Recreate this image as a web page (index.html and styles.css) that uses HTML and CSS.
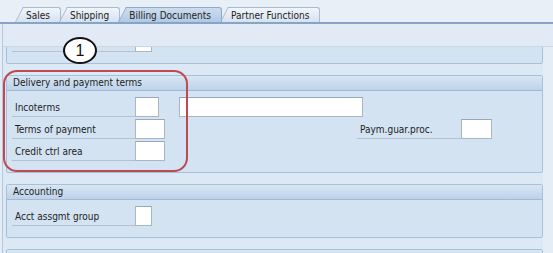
FILE: index.html
```html
<!DOCTYPE html>
<html>
<head>
<meta charset="utf-8">
<link rel="stylesheet" href="styles.css">
</head>
<body>
<div class="tabbar">
  <div class="tab">Sales</div>
  <div class="tab">Shipping</div>
  <div class="tab active">Billing Documents</div>
  <div class="tab">Partner Functions</div>
</div>
<div class="panel">
  <div class="band"></div>
  <div class="scroll">
    <div class="groups">
      <section class="group">
        <div class="ghead">Sales Data</div>
        <div class="gbody">
          <div class="row"><span class="label"></span><span class="input w17"></span></div>
        </div>
      </section>
      <section class="group">
        <div class="ghead">Delivery and payment terms</div>
        <div class="gbody">
          <div class="row"><span class="label">Incoterms</span><span class="input w24"></span><span class="input w184 gap20"></span></div>
          <div class="row"><span class="label">Terms of payment</span><span class="input w30"></span><span class="label label2">Paym.guar.proc.</span><span class="input w31"></span></div>
          <div class="row"><span class="label">Credit ctrl area</span><span class="input w30"></span></div>
        </div>
      </section>
      <section class="group">
        <div class="ghead">Accounting</div>
        <div class="gbody">
          <div class="row"><span class="label">Acct assgmt group</span><span class="input w17"></span></div>
        </div>
      </section>
      <section class="group">
        <div class="ghead"><span class="mark"></span></div>
        <div class="gbody"></div>
      </section>
    </div>
  </div>
</div>
<div class="highlight"></div>
<div class="badge">1</div>
</body>
</html>
```
FILE: styles.css
```css
body {
  margin: 0;
  width: 553px;
  height: 253px;
  overflow: hidden;
  position: relative;
  background: #e4edf6;
  font-family: "DejaVu Sans Condensed", "DejaVu Sans", sans-serif;
  font-stretch: condensed;
  font-size: 10px;
  color: #222;
}

.tabbar {
  display: flex;
  height: 15px;
  padding: 7px 0 0 23px;
  background: #e9eff6;
  border-bottom: 2px solid #86a4c6;
}

.tab {
  position: relative;
  z-index: 1;
  height: 14px;
  line-height: 15px;
  padding: 0 10px 0 3px;
  margin-right: 6px;
  border: 1px solid #a7bbd2;
  border-left: 0;
  border-bottom: 0;
  border-radius: 0 3px 0 0;
  background: linear-gradient(#f1f5fa, #d6e2ef);
  white-space: nowrap;
}

.tab::before {
  content: "";
  position: absolute;
  z-index: -1;
  left: -8px;
  top: -1px;
  bottom: 0;
  width: 12px;
  background: inherit;
  border-left: 1px solid #a7bbd2;
  border-top: 1px solid #a7bbd2;
  transform: skewX(-28deg);
  transform-origin: bottom left;
}

.tab.active {
  z-index: 2;
  background: linear-gradient(#cddcee, #b1c9e4);
  border-color: #8fabcc;
}

.tab.active::before {
  border-color: #8fabcc;
}

.panel {
  border-left: 1px solid #b5c8dd;
  margin-left: 2px;
}

.band {
  height: 22px;
  background: #e2ebf5;
  border-bottom: 1px solid #c9d7e7;
}

.scroll {
  height: 206px;
  width: 537px;
  overflow: hidden;
  padding-left: 3px;
  background: #dce8f4;
}

.groups {
  margin-top: -37px;
  display: flex;
  flex-direction: column;
  gap: 11px;
}

.group {
  border: 1px solid #a9c0da;
  border-radius: 2px;
  background: #d4e3f2;
}

.ghead {
  height: 14px;
  line-height: 14px;
  padding-left: 6px;
  background: linear-gradient(#d8e6f4, #bdd2e9);
  border-bottom: 1px solid #a0b9d5;
}

.mark {
  display: inline-block;
  width: 5px;
  height: 2px;
  margin: 3px 0 0 2px;
  vertical-align: top;
  background: #555;
}

.gbody {
  padding: 6px 0 11px 5px;
  display: flex;
  flex-direction: column;
  gap: 2px;
}

.row {
  display: flex;
  height: 20px;
}

.label {
  box-sizing: border-box;
  width: 123px;
  height: 20px;
  padding: 1px 0 0 3px;
  line-height: 19px;
  border-bottom: 1px solid #b3c1d0;
  white-space: nowrap;
}

.label2 {
  width: 104px;
  margin-left: 192px;
}

.input {
  box-sizing: border-box;
  height: 20px;
  background: #fff;
  border: 1px solid #a8b6c6;
  border-top-color: #98a8ba;
}

.w17 { width: 17px; }
.w24 { width: 24px; }
.w30 { width: 30px; }
.w31 { width: 31px; }
.w184 { width: 184px; }
.gap20 { margin-left: 20px; }

.highlight {
  position: absolute;
  left: 3px;
  top: 70px;
  width: 185px;
  height: 102px;
  box-sizing: border-box;
  border: 2px solid #bd4a50;
  border-radius: 14px;
}

.badge {
  position: absolute;
  left: 63px;
  top: 37px;
  width: 34px;
  height: 27px;
  box-sizing: border-box;
  border: 2px solid #111;
  border-radius: 50%;
  background: #fff;
  text-align: center;
  line-height: 24px;
  font-family: "Liberation Sans", Arial, sans-serif;
  font-stretch: normal;
  font-size: 16px;
  color: #111;
}
```
